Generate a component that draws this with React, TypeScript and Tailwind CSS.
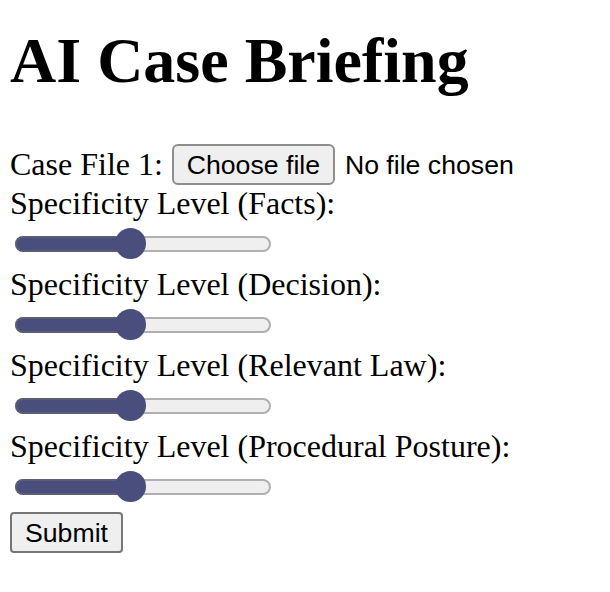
import React from "react";

const serif = { fontFamily: '"Liberation Serif", "Times New Roman", serif' };

function Slider() {
  return (
    <div className="h-[44px] flex items-center">
      <div className="relative ml-[5px] w-[256px] h-[16px]">
        <div className="absolute inset-0 rounded-full bg-[#efefef] border-2 border-[#b0b0b0]" />
        <div className="absolute left-0 top-0 h-[16px] w-[120px] rounded-l-full bg-[#4a4e7c] border-2 border-r-0 border-[#5b5d73]" />
        <div className="absolute left-[100px] top-[-8px] w-[31px] h-[31px] rounded-full bg-[#4a4e7c]" />
      </div>
    </div>
  );
}

function Group({ label }: { label: string }) {
  return (
    <div>
      <div className="text-[32px] leading-[37px] text-black" style={serif}>
        {label}
      </div>
      <Slider />
    </div>
  );
}

export default function App() {
  return (
    <div className="w-[610px] h-[592px] bg-white pl-[10px] text-black" style={serif}>
      <h1 className="pt-[24px] text-[64px] leading-[74px] font-bold" style={serif}>
        AI Case Briefing
      </h1>
      <div className="mt-[46px] h-[41px] flex items-center">
        <span className="text-[32px] leading-[37px]">Case File 1:</span>
        <div
          className="ml-[9px] h-[41px] w-[163px] flex items-center justify-center rounded-[6px] border-2 border-[#8e8e8e] bg-[#efefef] text-[26.67px] text-black"
          style={{ fontFamily: '"Liberation Sans", Arial, sans-serif' }}
        >
          Choose file
        </div>
        <span
          className="ml-[10px] text-[26.67px]"
          style={{ fontFamily: '"Liberation Sans", Arial, sans-serif' }}
        >
          No file chosen
        </span>
      </div>
      <Group label="Specificity Level (Facts):" />
      <Group label="Specificity Level (Decision):" />
      <Group label="Specificity Level (Relevant Law):" />
      <Group label="Specificity Level (Procedural Posture):" />
      <div
        className="mt-[3px] h-[41px] w-[113px] flex items-center justify-center rounded-[4px] border-2 border-[#767676] bg-[#efefef] text-[26.67px]"
        style={{ fontFamily: '"Liberation Sans", Arial, sans-serif' }}
      >
        Submit
      </div>
    </div>
  );
}
